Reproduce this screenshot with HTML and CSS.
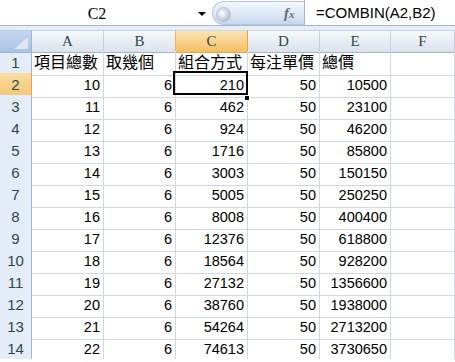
FILE: index.html
```html
<!DOCTYPE html>
<html>
<head>
    <meta charset="UTF-8">
    <title>COMBIN</title>
    <link rel="stylesheet" href="styles.css">
</head>
<body>
    <!-- barra della formula -->
    <div class="formula-bar">
        <div class="name-box">C2<span class="arrow"></span></div>
        <div class="fx-zone">
            <span class="knob"></span>
            <span class="fx">f<span class="fx-x">x</span></span>
        </div>
        <div class="formula">=COMBIN(A2,B2)</div>
    </div>
    <div class="gap"></div>

    <!-- foglio -->
    <div class="sheet">
        <div class="row head">
            <div class="corner"><span class="tri"></span></div>
            <div class="col">A</div>
            <div class="col">B</div>
            <div class="col sel">C</div>
            <div class="col">D</div>
            <div class="col">E</div>
            <div class="col">F</div>
        </div>
        <div class="row">
            <div class="rh">1</div>
            <div class="c t">項目總數</div>
            <div class="c t">取幾個</div>
            <div class="c t">組合方式</div>
            <div class="c t">每注單價</div>
            <div class="c t">總價</div>
            <div class="c"></div>
        </div>
        <div class="row">
            <div class="rh sel">2</div>
            <div class="c n">10</div>
            <div class="c n">6</div>
            <div class="c n active">210<span class="handle"></span></div>
            <div class="c n">50</div>
            <div class="c n">10500</div>
            <div class="c"></div>
        </div>
        <div class="row">
            <div class="rh">3</div>
            <div class="c n">11</div>
            <div class="c n">6</div>
            <div class="c n">462</div>
            <div class="c n">50</div>
            <div class="c n">23100</div>
            <div class="c"></div>
        </div>
        <div class="row">
            <div class="rh">4</div>
            <div class="c n">12</div>
            <div class="c n">6</div>
            <div class="c n">924</div>
            <div class="c n">50</div>
            <div class="c n">46200</div>
            <div class="c"></div>
        </div>
        <div class="row">
            <div class="rh">5</div>
            <div class="c n">13</div>
            <div class="c n">6</div>
            <div class="c n">1716</div>
            <div class="c n">50</div>
            <div class="c n">85800</div>
            <div class="c"></div>
        </div>
        <div class="row">
            <div class="rh">6</div>
            <div class="c n">14</div>
            <div class="c n">6</div>
            <div class="c n">3003</div>
            <div class="c n">50</div>
            <div class="c n">150150</div>
            <div class="c"></div>
        </div>
        <div class="row">
            <div class="rh">7</div>
            <div class="c n">15</div>
            <div class="c n">6</div>
            <div class="c n">5005</div>
            <div class="c n">50</div>
            <div class="c n">250250</div>
            <div class="c"></div>
        </div>
        <div class="row">
            <div class="rh">8</div>
            <div class="c n">16</div>
            <div class="c n">6</div>
            <div class="c n">8008</div>
            <div class="c n">50</div>
            <div class="c n">400400</div>
            <div class="c"></div>
        </div>
        <div class="row">
            <div class="rh">9</div>
            <div class="c n">17</div>
            <div class="c n">6</div>
            <div class="c n">12376</div>
            <div class="c n">50</div>
            <div class="c n">618800</div>
            <div class="c"></div>
        </div>
        <div class="row">
            <div class="rh">10</div>
            <div class="c n">18</div>
            <div class="c n">6</div>
            <div class="c n">18564</div>
            <div class="c n">50</div>
            <div class="c n">928200</div>
            <div class="c"></div>
        </div>
        <div class="row">
            <div class="rh">11</div>
            <div class="c n">19</div>
            <div class="c n">6</div>
            <div class="c n">27132</div>
            <div class="c n">50</div>
            <div class="c n">1356600</div>
            <div class="c"></div>
        </div>
        <div class="row">
            <div class="rh">12</div>
            <div class="c n">20</div>
            <div class="c n">6</div>
            <div class="c n">38760</div>
            <div class="c n">50</div>
            <div class="c n">1938000</div>
            <div class="c"></div>
        </div>
        <div class="row">
            <div class="rh">13</div>
            <div class="c n">21</div>
            <div class="c n">6</div>
            <div class="c n">54264</div>
            <div class="c n">50</div>
            <div class="c n">2713200</div>
            <div class="c"></div>
        </div>
        <div class="row">
            <div class="rh">14</div>
            <div class="c n">22</div>
            <div class="c n">6</div>
            <div class="c n">74613</div>
            <div class="c n">50</div>
            <div class="c n">3730650</div>
            <div class="c"></div>
        </div>
    </div>
</body>
</html>
```

FILE: styles.css
```css
body {
    margin: 0;
    background: #fff;
    font-family: "Liberation Sans", Arial, sans-serif;
    overflow: hidden;
}
.formula-bar {
    display: flex;
    height: 25px;
    border-bottom: 1px solid #a4b5cc;
    background: #fff;
}
.name-box {
    position: relative;
    width: 212px;
    font-family: "Liberation Serif", serif;
    font-size: 16px;
    line-height: 27px;
    text-align: center;
    padding-right: 18px;
    box-sizing: border-box;
}
.arrow {
    position: absolute;
    left: 198px;
    top: 12px;
    width: 0;
    height: 0;
    border-left: 4px solid transparent;
    border-right: 4px solid transparent;
    border-top: 4px solid #000;
}
.fx-zone {
    position: relative;
    width: 91px;
    margin-top: 1px;
    border-radius: 12px 0 0 12px;
    border: 1px solid #b4c6de;
    border-right: none;
    background: linear-gradient(#f4f8fd, #dde8f6 55%, #c6d7ee);
}
.knob {
    position: absolute;
    left: 3px;
    top: 5px;
    width: 13px;
    height: 13px;
    border-radius: 50%;
    background: radial-gradient(circle at 40% 40%, #ffffff, #c9cfd8 55%, #9aa4b2);
    border: 1px solid #b8c3d2;
}
.fx {
    position: absolute;
    left: 71px;
    top: 3px;
    font-family: "Liberation Serif", serif;
    font-style: italic;
    font-weight: bold;
    font-size: 15px;
    color: #6b6b6b;
}
.fx-x {
    font-size: 11px;
}
.formula {
    flex: 1;
    border-left: 1px solid #a4b5cc;
    padding-left: 11px;
    font-size: 15px;
    line-height: 26px;
}
.gap {
    height: 4px;
    background: #e6edf6;
}
.row {
    display: grid;
    grid-template-columns: 32px 72px 72px 72px 72px 71px 1fr;
    height: 22px;
}
.row.head {
    height: 21px;
}
.corner {
    position: relative;
    border-right: 1px solid #9eb6ce;
    border-bottom: 1px solid #9eb6ce;
    border-top: 1px solid #b9cbe2;
    background: linear-gradient(#c4d6ef, #a9c3e6);
}
.tri {
    position: absolute;
    right: 3px;
    bottom: 3px;
    width: 0;
    height: 0;
    border-left: 14px solid transparent;
    border-bottom: 12px solid #dfe7f2;
}
.col {
    border-right: 1px solid #c5d2e2;
    border-bottom: 1px solid #9eb6ce;
    border-top: 1px solid #c9d6e6;
    background: linear-gradient(#f7f9fc, #e6ebf2 60%, #dbe2ec);
    font-family: "Liberation Serif", serif;
    font-size: 15px;
    color: #2c4848;
    text-align: center;
    line-height: 21px;
}
.col.sel {
    background: linear-gradient(#fbe3b2, #f6cf85 60%, #f1c15f);
    border-left: 1px solid #f2b25a;
    border-right: 1px solid #f2a040;
    border-bottom-color: #f2a040;
    margin-left: -1px;
}
.rh {
    background: #e4ecf7;
    border-right: 1px solid #9eb6ce;
    border-bottom: 1px solid #c0cfe3;
    font-size: 15px;
    color: #2c4848;
    text-align: center;
    line-height: 24px;
}
.rh.sel {
    background: linear-gradient(#f9dba3, #f4c872);
    border-right-color: #f2a040;
    border-bottom-color: #f2b25a;
}
.c {
    border-right: 1px solid #d0d7e5;
    border-bottom: 1px solid #d0d7e5;
    box-sizing: border-box;
    white-space: nowrap;
    overflow: visible;
}
.c.t {
    font-family: "Noto Sans CJK TC", sans-serif;
    font-size: 16px;
    line-height: 21px;
    padding-left: 2px;
}
.c.n {
    font-size: 14.5px;
    line-height: 24px;
    text-align: right;
    padding-right: 3px;
}
.active {
    position: relative;
}
.active::before {
    content: "";
    position: absolute;
    left: -3px;
    top: -2px;
    width: 75px;
    height: 24px;
    border: 2px solid #000;
    box-sizing: border-box;
}
.handle {
    position: absolute;
    right: -3px;
    bottom: -4px;
    width: 6px;
    height: 6px;
    background: #000;
    border: 1px solid #fff;
    box-sizing: border-box;
}
```
